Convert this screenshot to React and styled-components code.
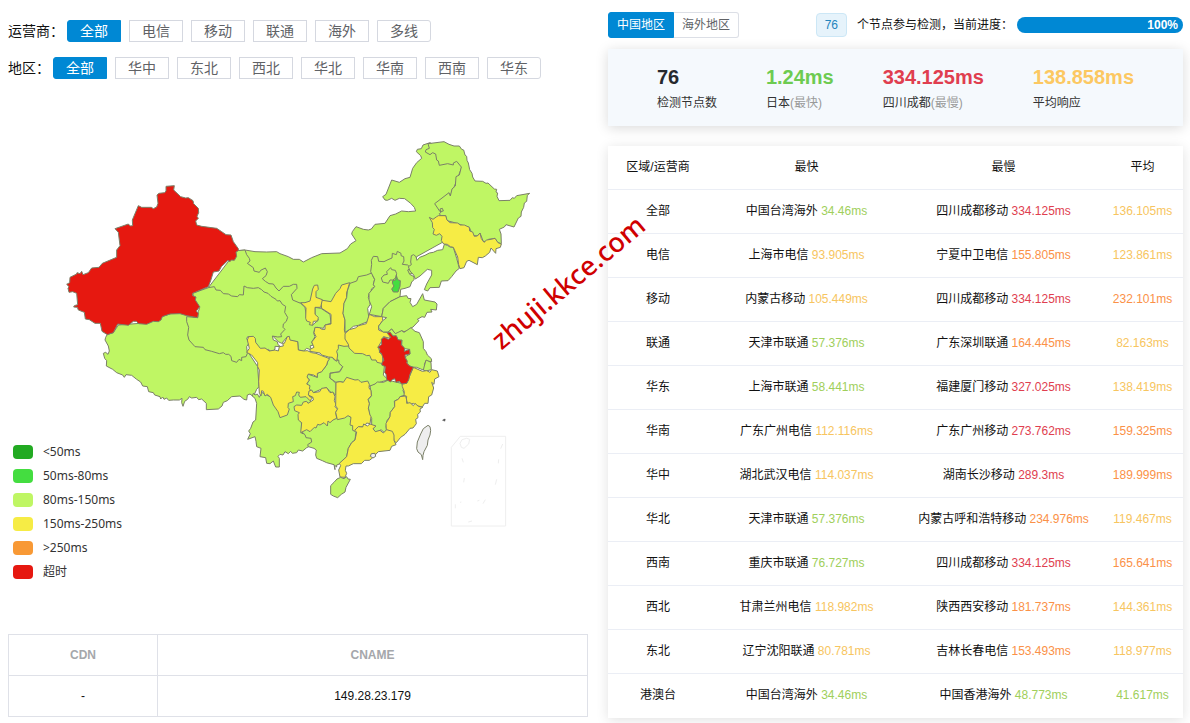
import { useState } from 'react';
import styled, { createGlobalStyle } from 'styled-components';

const blue = '#0088d4';
const green = '#a0cf5b';
const yellow = '#f7c560';
const orange = '#fb9147';
const red = '#e03e4f';

const slow = '#f6ec45';
const good = '#bff664';
const fast = '#44dd40';
const timeout = '#e61810';

const carriers = ['全部', '电信', '移动', '联通', '海外', '多线'];
const regions = ['全部', '华中', '东北', '西北', '华北', '华南', '西南', '华东'];
const areas = ['中国地区', '海外地区'];

const legend = [
  { label: '<50ms', color: '#22aa22' },
  { label: '50ms-80ms', color: fast },
  { label: '80ms-150ms', color: good },
  { label: '150ms-250ms', color: slow },
  { label: '>250ms', color: '#f89935' },
  { label: '超时', color: timeout },
];

const stats = [
  { value: '76', label: '检测节点数', color: '#26292e' },
  { value: '1.24ms', label: '日本', note: '(最快)', color: '#6dcb51' },
  { value: '334.125ms', label: '四川成都', note: '(最慢)', color: red },
  { value: '138.858ms', label: '平均响应', color: '#fcc862' },
];

const rows = [
  ['全部', '中国台湾海外', '34.46ms', green, '四川成都移动', '334.125ms', red, '136.105ms', yellow],
  ['电信', '上海市电信', '93.905ms', yellow, '宁夏中卫电信', '155.805ms', orange, '123.861ms', yellow],
  ['移动', '内蒙古移动', '105.449ms', yellow, '四川成都移动', '334.125ms', red, '232.101ms', orange],
  ['联通', '天津市联通', '57.376ms', green, '广东深圳联通', '164.445ms', orange, '82.163ms', yellow],
  ['华东', '上海市联通', '58.441ms', green, '福建厦门移动', '327.025ms', red, '138.419ms', yellow],
  ['华南', '广东广州电信', '112.116ms', yellow, '广东广州移动', '273.762ms', red, '159.325ms', orange],
  ['华中', '湖北武汉电信', '114.037ms', yellow, '湖南长沙移动', '289.3ms', red, '189.999ms', orange],
  ['华北', '天津市联通', '57.376ms', green, '内蒙古呼和浩特移动', '234.976ms', orange, '119.467ms', yellow],
  ['西南', '重庆市联通', '76.727ms', green, '四川成都移动', '334.125ms', red, '165.641ms', orange],
  ['西北', '甘肃兰州电信', '118.982ms', yellow, '陕西西安移动', '181.737ms', orange, '144.361ms', yellow],
  ['东北', '辽宁沈阳联通', '80.781ms', yellow, '吉林长春电信', '153.493ms', orange, '118.977ms', yellow],
  ['港澳台', '中国台湾海外', '34.46ms', green, '中国香港海外', '48.773ms', green, '41.617ms', green],
];

// Later provinces cover the overlapping edges of earlier ones.
const provinces = [
  { name: '西藏', at: '-420 60', fill: good, d: 'M52 283L47 292 45 300 55 318 58 333 54 343 47 337 40 340 44 355 50 362 49 378 68 388 80 398 98 405 103 412 108 404 125 406 140 418 152 426 158 438 172 440 176 455 190 458 194 465 210 470 212 477 218 471 222 478 230 474 236 481 250 480 268 480 276 475 275 488 279 499 284 484 293 478 298 470 305 474 320 472 326 479 335 477 349 490 349 509 385 507 396 498 400 487 412 482 425 470 450 468 462 478 470 480 472 465 480 462 490 470 500 448 507 440 503 380 480 345 450 300 330 280 310 230 285 215 245 220 215 230 150 250 85 255 70 278Z' },
  { name: '内蒙古', at: '0 0', fill: good, d: 'M25 92L45 90 75 95 110 96 140 95 150 101 175 110 190 118 208 118 220 126 245 113 275 101 330 99 352 86 362 72 378 62 365 42 367 35 378 20 400 28 415 30 424 27 435 13 465 10 480 -13 497 -18 515 -27 535 -25 557 -27 553 -38 542 -50 524 -64 508 -65 495 -59 485 -65 472 -59 465 -60 458 -70 468 -77 485 -120 508 -113 525 -124 540 -128 548 -155 560 -172 575 -185 572 -193 559 -205 562 -212 574 -214 579 -225 600 -232 700 -170 665 -80 625 -45 640 -10 650 60 560 110 550 160 430 180 360 200 340 250 250 260 130 230 30 190Z' },
  { name: '甘肃', at: '0 0', fill: good, d: 'M20 92L45 90 50 104 58 115 60 123 52 130 70 143 72 153 88 157 92 151 106 144 112 155 108 167 97 176 106 184 117 191 130 192 138 204 147 213 160 199 178 199 190 193 200 193 201 205 184 224 188 240 212 250 225 262 230 295 248 315 265 300 255 285 255 262 273 265 300 283 303 310 285 315 280 325 262 322 255 323 251 340 255 350 245 367 250 375 240 378 245 390 230 385 221 393 205 390 203 365 178 362 172 350 155 370 145 365 133 353 60 280 -70 220 -65 203Z' },
  { name: '青海', at: '-420 60', fill: good, d: 'M308 160L355 143 373 140 378 150 391 151 400 161 415 162 425 168 443 170 448 164 460 165 462 138 472 143 490 145 505 143 515 149 522 156 534 160 543 169 558 178 562 183 570 182 577 193 587 199 584 217 593 232 589 244 580 252 579 262 585 268 572 282 575 290 563 291 547 288 550 300 562 305 564 314 572 320 555 319 555 327 545 337 535 328 521 333 510 328 497 312 490 292 473 290 470 296 477 309 470 320 472 340 468 350 455 352 455 362 447 358 440 367 425 362 423 349 416 343 407 343 400 338 388 341 365 334 345 329 340 322 315 320 297 300 293 285 296 262 290 245 290 230 323 233 325 215 329 202 312 178Z' },
  { name: '新疆', at: '-540 -150', fill: timeout, d: 'M348 49L373 47 371 60 392 80 407 84 415 83 429 92 431 101 445 115 446 128 441 139 445 145 437 153 440 165 455 169 500 175 515 185 528 194 543 195 550 215 565 236 565 242 558 246 560 259 553 271 544 270 540 275 534 271 514 290 507 303 490 306 482 332 475 350 428 370 428 377 438 381 436 390 449 410 439 423 445 430 443 443 410 437 390 431 360 432 337 440 333 450 325 455 310 454 290 463 266 461 259 454 250 454 235 466 203 462 190 488 172 494 156 484 151 460 135 460 118 449 106 447 103 427 85 420 82 412 71 411 73 407 83 404 80 370 68 365 57 367 54 355 57 350 50 343 59 338 60 322 80 312 81 308 90 311 95 304 99 314 115 308 125 294 147 292 157 280 200 262 200 240 210 227 205 187 195 176 235 162 241 168 248 167 247 150 265 107 275 112 304 112 310 116 320 111 324 100 321 75 327 70 344 68 348 63Z' },
  { name: '云南', at: '0 360', fill: good, d: 'M95 157L88 172 82 162 75 165 70 160 67 168 75 175 80 190 77 240 69 246 62 265 56 273 61 281 53 298 75 290 78 304 80 320 93 325 90 350 107 353 110 370 120 371 130 363 137 381 148 381 148 355 144 349 150 343 159 345 165 335 175 341 182 334 187 340 200 338 205 330 218 333 230 323 240 318 248 300 240 285 215 280 215 260 212 215 240 200 245 145 200 140 165 190 120 170Z' },
  { name: '湖北', at: '0 0', fill: good, d: 'M325 370L355 370 385 390 430 400 465 425 460 465 475 480 455 485 442 490 425 498 400 500 350 490 340 487 330 485 318 487 300 475 300 460 330 455 338 440 325 430 315 400Z' },
  { name: '重庆', at: '0 0', fill: good, d: 'M297 412L303 408 315 422 326 420 327 430 338 440 328 455 300 459 299 474 307 480 318 490 318 525 300 515 290 503 275 507 250 518 240 515 230 492 238 480 230 470 235 463 262 472 262 460 275 455 290 435Z' },
  { name: '四川', at: '0 0', fill: slow, d: 'M52 360L56 350 70 349 76 355 77 367 91 385 105 384 118 393 135 390 145 393 148 380 160 378 158 369 163 370 172 350 178 349 180 360 203 365 205 390 221 393 232 392 245 398 258 400 275 407 299 416 293 424 290 435 275 455 262 460 262 472 251 465 235 462 231 471 238 480 230 492 240 497 238 507 248 515 236 522 239 530 248 533 240 542 228 530 211 532 206 525 208 517 200 516 196 527 188 530 190 545 175 550 174 563 178 567 172 585 150 593 144 575 130 555 122 532 112 523 105 528 100 514 95 512 93 528 88 520 86 484 88 450 83 440 83 428 65 405 50 397 58 385Z' },
  { name: '广西', at: '0 360', fill: good, d: 'M215 275L245 250 300 235 345 215 370 240 380 270 378 275 375 300 365 308 355 325 350 350 328 372 320 375 320 381 314 376 315 389 312 374 290 368 277 362 260 355 257 345 259 330 252 325 235 320 233 314 245 306 243 295 228 293 225 284Z' },
  { name: '贵州', at: '0 360', fill: slow, d: 'M192 200L200 195 215 196 220 186 230 184 234 190 250 180 249 172 235 165 237 153 245 150 250 158 269 155 275 145 290 143 300 158 309 156 315 170 313 182 318 193 315 200 323 208 317 217 320 235 309 240 300 248 294 243 292 258 282 248 270 255 263 253 258 264 253 262 240 275 230 269 212 278 215 248 205 240 204 224 208 218 194 212Z' },
  { name: '陕西', at: '0 0', fill: slow, d: 'M359 188L354 205 350 219 350 233 342 250 342 265 339 280 345 300 343 330 357 378 342 379 325 375 325 386 320 394 323 405 320 424 307 412 296 411 275 405 270 399 240 394 240 388 252 382 245 366 258 350 252 338 255 322 268 323 276 328 285 328 285 315 303 312 303 283 275 265 272 240 303 245 317 220 330 206 335 195Z' },
  { name: '宁夏', at: '0 0', fill: slow, d: 'M253 196L263 195 265 208 258 215 258 232 277 239 272 262 255 262 255 283 265 292 263 303 250 304 248 316 238 314 241 307 230 303 227 295 228 263 212 248 225 248 240 243 248 207Z' },
  { name: '山西', at: '0 0', fill: good, d: 'M360 190L380 183 385 170 410 165 427 158 428 167 434 178 430 193 434 200 424 207 424 218 417 220 415 233 420 242 420 254 413 265 416 290 415 304 385 316 370 319 358 329 345 337 345 300 339 280 342 250 350 233 352 213Z' },
  { name: '河北', at: '0 0', fill: good, d: 'M425 133L424 121 430 109 443 110 446 124 462 125 474 119 486 114 487 100 499 104 502 94 513 100 513 107 521 110 522 123 517 133 533 135 543 145 533 150 539 163 552 170 552 179 545 186 540 200 525 205 512 208 510 230 480 245 460 265 455 290 418 283 425 260 417 240 417 220 434 200 430 193 434 178 422 155Z' },
  { name: '北京', at: '0 0', fill: good, d: 'M458 186L454 174 462 165 472 163 470 155 482 143 485 149 496 151 500 161 497 174 488 180 480 180 475 190Z' },
  { name: '天津', at: '0 0', fill: fast, d: 'M499 166L503 179 511 182 510 199 504 216 490 216 485 207 492 198 487 190 488 182 497 180Z' },
  { name: '河南', at: '0 0', fill: slow, d: 'M418 283L434 290 458 290 458 302 446 318 446 330 460 336 478 338 481 355 460 350 457 360 445 380 450 399 458 403 458 431 441 427 438 420 425 420 419 406 410 407 398 401 374 400 357 384 355 373 345 357 345 341 358 329 376 324 386 317 409 311Z' },
  { name: '山东', at: '0 0', fill: good, d: 'M455 290L460 265 480 245 510 230 530 227 534 235 543 236 540 247 548 260 560 253 578 221 583 240 615 246 621 252 619 270 602 268 606 276 591 277 584 292 576 290 562 298 567 302 549 321 541 325 540 330 522 335 515 332 505 341 496 341 490 335 485 327 474 336 460 336 446 325 446 318 458 302 470 293Z' },
  { name: '江苏', at: '0 0', fill: good, d: 'M474 336L485 327 496 341 515 332 522 337 543 323 555 334 568 338 580 365 580 385 588 395 592 405 604 416 605 425 588 423 583 433 590 440 580 450 560 442 542 441 532 430 526 410 540 402 538 388 523 386 515 375 516 360 504 362 500 350 490 348Z' },
  { name: '上海', at: '0 0', fill: good, d: 'M588 420L603 427 604 449 588 453 580 450 583 438Z' },
  { name: '江西', at: '0 360', fill: good, d: 'M420 138L435 132 442 126 460 127 475 120 488 124 515 130 523 141 519 152 525 165 510 170 505 178 493 183 494 200 481 217 480 230 471 242 468 260 470 270 463 278 453 269 440 278 430 268 433 256 425 258 425 235 418 225 415 200 418 191 414 178 425 168Z' },
  { name: '浙江', at: '0 0', fill: slow, d: 'M550 442L577 454 590 452 600 457 605 449 622 453 627 470 614 477 612 493 605 487 611 504 605 525 596 530 594 550 584 550 577 561 560 557 550 550 535 555 529 540 530 529 522 527 523 515 517 500 516 492 530 490Z' },
  { name: '安徽', at: '0 0', fill: timeout, d: 'M472 340L480 336 489 348 499 347 504 359 515 361 514 375 524 384 523 394 539 388 540 402 525 405 526 415 532 423 530 429 538 437 550 442 540 463 536 480 530 490 515 492 508 484 498 487 494 476 485 480 482 486 470 479 468 462 464 458 466 440 455 435 457 425 462 422 454 400 448 397 450 386 443 382 455 373 454 357 463 352 475 358 482 352Z' },
  { name: '湖南', at: '0 360', fill: slow, d: 'M318 127L330 125 340 127 350 112 375 120 385 119 393 127 413 123 418 133 417 144 423 152 424 167 414 178 418 191 415 205 420 225 423 230 420 251 410 249 403 260 385 261 375 274 368 271 368 257 360 255 363 232 354 227 344 234 322 239 317 217 323 206 317 198Z' },
  { name: '福建', at: '0 360', fill: slow, d: 'M527 168L530 180 530 190 540 188 550 197 555 190 565 199 578 202 570 207 571 216 563 223 564 233 557 238 559 251 549 264 540 265 525 283 512 292 499 308 492 303 490 290 481 273 469 272 468 250 480 230 481 217 494 200 494 183 505 178 510 170Z' },
  { name: '广东', at: '0 360', fill: slow, d: 'M375 300L380 276 374 271 385 260 398 261 401 252 412 258 420 252 438 258 429 266 436 275 450 271 460 279 470 269 487 274 492 285 492 301 498 314 485 319 480 331 445 335 425 356 418 361 404 361 394 371 370 371 355 378 348 378 346 391 350 400 345 412 330 411 326 390 332 377 328 370 350 350 355 325 365 308Z' },
  { name: '香港', at: '0 360', fill: '#eee', d: 'M424 341L435 340 437 349 429 354 421 349Z' },
  { name: '海南', at: '0 360', fill: good, d: 'M302 437L312 427 321 417 332 412 342 416 350 410 354 417 361 418 348 442 345 456 334 463 323 473 310 468 302 463Z' },
  { name: '黑龙江', at: '420 -270', fill: good, d: 'M174 41L222 35 237 43 252 48 268 48 275 58 281 60 285 75 290 79 291 91 295 99 299 119 306 130 308 141 315 153 338 154 348 160 354 159 373 177 380 178 378 186 383 189 381 199 387 212 420 211 427 203 433 205 440 197 479 190 472 196 470 214 463 219 461 232 454 246 453 259 445 264 432 291 408 284 403 291 388 298 393 312 394 341 383 338 375 325 355 328 352 333 340 335 330 309 322 318 308 316 298 292 265 282 247 276 230 272 227 257 212 257 208 251 213 247 210 237 217 235 220 243 210 245 194 221 237 188 241 198 246 177 256 168 258 140 268 135 274 111 260 94 250 99 250 105 233 101 208 106 205 93 200 90 197 72 188 68 180 74 166 66 168 59 178 55Z' },
  { name: '辽宁', at: '420 -270', fill: good, d: 'M124 377L131 374 138 380 141 391 149 382 165 376 178 369 190 367 203 361 218 359 223 343 232 346 240 351 250 352 260 385 268 415 258 423 245 440 234 452 214 453 208 472 180 473 173 483 163 479 170 462 185 435 185 421 172 418 150 438 136 447 131 435 120 423 115 410 124 404 122 396Z' },
  { name: '吉林', at: '420 -270', fill: slow, d: 'M178 262L189 268 200 260 205 257 227 257 231 270 240 278 263 279 271 285 283 285 298 292 299 303 308 306 313 319 322 318 330 309 334 326 342 337 350 330 363 328 375 325 384 338 394 342 391 352 378 356 377 370 363 354 359 367 346 378 337 383 325 382 322 404 297 391 290 394 282 413 270 416 266 404 263 381 250 352 241 350 232 343 221 342 214 332 216 319 209 311 199 316 189 312 193 298 188 293 187 278Z' },
  { name: '台湾', at: '510 540', fill: '#eee', d: 'M84 76L90 80 92 91 90 105 84 120 82 136 72 155 69 166 68 179 64 164 54 156 50 146 52 126 62 102 70 86Z' },
];

const seaMarks =
  'M181 109H317V378H154V142ZM186 119L200 115 209 118 206 132 192 145 184 142 180 130ZM308 132L302 146M186 175L190 187M296 178L295 190M193 234L191 247M290 238L286 254M166 313V325M180 307L184 306M232 303L238 301M256 299L249 311M205 366L216 363';

const ChinaMap = () => (
  <MapSvg viewBox="-666 -360 1740 1590" role="img" aria-label="中国地区">
    <g stroke="#7b8068" strokeWidth="3" strokeLinejoin="round">
      {provinces.map(el => (
        <path key={el.name} d={el.d} fill={el.fill} transform={`translate(${el.at})`} />
      ))}
    </g>
    <path d="M637 601L642 597 646 597 645 604 640 602Z" fill="#555" stroke="#777" />
    <path d={seaMarks} transform="translate(510 540)" fill="none" stroke="#eee" strokeWidth="3" />
  </MapSvg>
);

const FilterRow = ({ label, items }) => {
  const [active, setActive] = useState(items[0]);

  return (
    <Filter role="group" aria-label={label}>
      <span>{label}：</span>
      <FilterList>
        {items.map(el => (
          <FilterButton
            key={el}
            type="button"
            $active={el === active}
            aria-pressed={el === active}
            onClick={() => setActive(el)}
          >
            {el}
          </FilterButton>
        ))}
      </FilterList>
    </Filter>
  );
};

const App = () => {
  const [area, setArea] = useState(areas[0]);
  const progress = 100;

  return (
    <>
      <GlobalStyle />
      <Page>
        <LeftColumn>
          <FilterRow label="运营商" items={carriers} />
          <FilterRow label="地区" items={regions} />
          <MapSection>
            <ChinaMap />
            <Legend>
              {legend.map(el => (
                <LegendItem key={el.label}>
                  <Swatch $color={el.color} />
                  {el.label}
                </LegendItem>
              ))}
            </Legend>
          </MapSection>
          <CnameTable>
            <colgroup>
              <col width="149" />
              <col />
            </colgroup>
            <thead>
              <tr>
                <th>CDN</th>
                <th>CNAME</th>
              </tr>
            </thead>
            <tbody>
              <tr>
                <td>-</td>
                <td>149.28.23.179</td>
              </tr>
            </tbody>
          </CnameTable>
        </LeftColumn>

        <RightColumn>
          <TopBar>
            <Tabs>
              {areas.map(el => (
                <Tab
                  key={el}
                  type="button"
                  $active={el === area}
                  aria-pressed={el === area}
                  onClick={() => setArea(el)}
                >
                  {el}
                </Tab>
              ))}
            </Tabs>
            <Status>
              <Count>76</Count>
              <span>个节点参与检测，当前进度：</span>
            </Status>
            <Track role="progressbar" aria-label="当前进度" aria-valuenow={progress}>
              <Bar style={{ width: `${progress}%` }}>{progress}%</Bar>
            </Track>
          </TopBar>

          <StatCard>
            {stats.map(el => (
              <div key={el.label}>
                <StatValue $color={el.color}>{el.value}</StatValue>
                <StatLabel>
                  {el.label}
                  {el.note && <Note>{el.note}</Note>}
                </StatLabel>
              </div>
            ))}
          </StatCard>

          <ResultTable>
            <colgroup>
              <col width="100" />
              <col />
              <col />
              <col width="81" />
            </colgroup>
            <thead>
              <tr>
                <th>区域/运营商</th>
                <th>最快</th>
                <th>最慢</th>
                <th>平均</th>
              </tr>
            </thead>
            <tbody>
              {rows.map(([name, fastNode, min, minColor, slowNode, max, maxColor, avg, avgColor]) => (
                <tr key={name}>
                  <td>{name}</td>
                  <td>
                    {fastNode} <Time $color={minColor}>{min}</Time>
                  </td>
                  <td>
                    {slowNode} <Time $color={maxColor}>{max}</Time>
                  </td>
                  <td>
                    <Time $color={avgColor}>{avg}</Time>
                  </td>
                </tr>
              ))}
            </tbody>
          </ResultTable>
        </RightColumn>
        <Watermark>zhuji.kkce.com</Watermark>
      </Page>
    </>
  );
};

export default App;

const GlobalStyle = createGlobalStyle`
  *,
  *::before,
  *::after {
    box-sizing: border-box;
  }

  body {
    margin: 0;
    background-color: #fff;
    color: #111;
    font-family: 'Liberation Sans', 'Noto Sans CJK SC', sans-serif;
    font-size: 12px;
    line-height: 18px;
  }

  button {
    font-family: inherit;
    cursor: pointer;
  }
`;

const Page = styled.main`
  position: relative;
  display: grid;
  grid-template-columns: minmax(0, 580fr) minmax(0, 575fr);
  gap: 20px;
  padding: 0 7px 6px 8px;
`;

const LeftColumn = styled.section`
  padding-top: 20px;
`;

const RightColumn = styled.section`
  padding-top: 12px;
`;

const Filter = styled.div`
  display: flex;
  align-items: center;
  gap: 3px;
  margin-bottom: 15px;
  font-size: 14px;
  line-height: 22px;
`;

const FilterList = styled.div`
  display: flex;
  gap: 8px;
`;

const FilterButton = styled.button`
  width: 54px;
  height: 22px;
  padding: 0;
  border: 1px solid ${({ $active }) => ($active ? blue : '#d5d8e0')};
  background-color: ${({ $active }) => ($active ? blue : '#fff')};
  color: ${({ $active }) => ($active ? '#fff' : '#606266')};
  font-size: 14px;
  line-height: 20px;

  &:first-child {
    border-radius: 3px 0 0 3px;
  }

  &:last-child {
    border-radius: 0 3px 3px 0;
  }
`;

const MapSection = styled.div`
  display: grid;
  margin: 21px 0 4px;

  > * {
    grid-area: 1 / 1;
  }
`;

const MapSvg = styled.svg`
  display: block;
  width: 100%;
  height: auto;
`;

const Legend = styled.ul`
  align-self: end;
  justify-self: start;
  margin: 0 0 46px;
  padding: 0 0 0 5px;
  list-style: none;
  color: #333;
  font-family: 'Noto Sans', 'Noto Sans CJK SC', sans-serif;
`;

const LegendItem = styled.li`
  display: flex;
  align-items: center;
  gap: 10px;
  height: 24px;
  line-height: 22px;
`;

const Swatch = styled.span`
  width: 20px;
  height: 14px;
  border-radius: 4px;
  background-color: ${({ $color }) => $color};
`;

const CnameTable = styled.table`
  width: 100%;
  border-collapse: collapse;
  table-layout: fixed;
  text-align: center;

  th,
  td {
    height: 41px;
    padding: 0;
    border: 1px solid #dfe1e8;
  }

  th {
    color: #a5a7ab;
    font-weight: 700;
  }
`;

const TopBar = styled.div`
  display: flex;
  align-items: center;
  height: 26px;
`;

const Tabs = styled.div`
  display: flex;
`;

const Tab = styled.button`
  height: 26px;
  padding: 0 8px;
  border: 1px solid ${({ $active }) => ($active ? blue : '#dcdfe6')};
  background-color: ${({ $active }) => ($active ? blue : '#fff')};
  color: ${({ $active }) => ($active ? '#fff' : '#606266')};
  font-size: 12px;
  line-height: 24px;

  &:first-child {
    border-radius: 3px 0 0 3px;
  }

  &:last-child {
    border-left: 0;
    border-radius: 0 3px 3px 0;
  }
`;

const Status = styled.div`
  display: flex;
  align-items: center;
  gap: 10px;
  margin-left: auto;
  white-space: nowrap;
`;

const Count = styled.span`
  padding: 0 8px;
  border: 1px solid #cce7f6;
  border-radius: 4px;
  background-color: #e6f3fb;
  color: #2485bd;
  line-height: 22px;
`;

const Track = styled.div`
  width: 166px;
  margin-left: 4px;
  border-radius: 8px;
  background-color: #ebeef5;
`;

const Bar = styled.div`
  height: 16px;
  padding-right: 5px;
  border-radius: 8px;
  background-color: ${blue};
  color: #fff;
  font-weight: 700;
  line-height: 17px;
  text-align: right;
`;

const StatCard = styled.div`
  display: flex;
  justify-content: space-evenly;
  margin-top: 11px;
  padding: 15px 0 14px;
  background-color: #f5f9fd;
  box-shadow: 0 2px 12px rgba(0, 0, 0, 0.15);
`;

const StatValue = styled.div`
  color: ${({ $color }) => $color};
  font-size: 20px;
  font-weight: 700;
  line-height: 26px;
`;

const StatLabel = styled.div`
  margin-top: 4px;
  color: #333;
`;

const Note = styled.span`
  color: #999;
`;

const ResultTable = styled.table`
  width: 100%;
  margin-top: 20px;
  border-spacing: 0;
  table-layout: fixed;
  background-color: #fff;
  box-shadow: 0 2px 12px rgba(0, 0, 0, 0.12);
  text-align: center;

  th,
  td {
    height: 44px;
    padding: 0 0 2px;
    border-bottom: 1px solid #ebeef5;
    font-weight: 400;
    white-space: nowrap;
  }

  tbody tr:last-child td {
    border-bottom: 0;
  }
`;

const Time = styled.span`
  color: ${({ $color }) => $color};
`;

const Watermark = styled.div`
  position: absolute;
  top: 282px;
  left: 568px;
  color: #d00000;
  font-family: 'Noto Sans', sans-serif;
  font-size: 27px;
  font-weight: 500;
  line-height: 32px;
  pointer-events: none;
  transform: translate(-50%, -50%) rotate(-40deg);
`;
